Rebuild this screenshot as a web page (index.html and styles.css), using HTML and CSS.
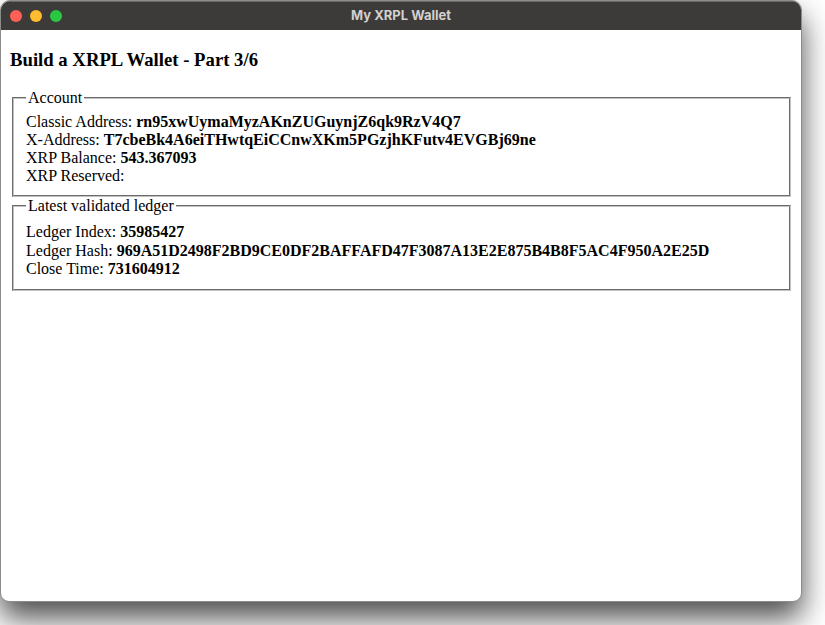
FILE: index.html
```html
<!DOCTYPE html>
<html>
<head>
<meta charset="utf-8">
<title>My XRPL Wallet</title>
<link rel="stylesheet" href="styles.css">
</head>
<body>
<div class="window">
  <div class="titlebar">
    <div class="lights">
      <span class="light red"></span>
      <span class="light yellow"></span>
      <span class="light green"></span>
    </div>
    <div class="title">My XRPL Wallet</div>
  </div>
  <div class="content">
    <h3 class="heading">Build a XRPL Wallet - Part 3/6</h3>
    <fieldset class="box">
      <legend>Account</legend>
      Classic Address: <strong>rn95xwUymaMyzAKnZUGuynjZ6qk9RzV4Q7</strong><br>
      X-Address: <strong>T7cbeBk4A6eiTHwtqEiCCnwXKm5PGzjhKFutv4EVGBj69ne</strong><br>
      XRP Balance: <strong>543.367093</strong><br>
      XRP Reserved: <strong></strong>
    </fieldset>
    <fieldset class="box ledger">
      <legend>Latest validated ledger</legend>
      Ledger Index: <strong>35985427</strong><br>
      Ledger Hash: <strong>969A51D2498F2BD9CE0DF2BAFFAFD47F3087A13E2E875B4B8F5AC4F950A2E25D</strong><br>
      Close Time: <strong>731604912</strong>
    </fieldset>
  </div>
</div>
</body>
</html>
```

FILE: styles.css
```css
html, body {
  margin: 0;
  padding: 0;
  background: #ffffff;
  width: 825px;
  height: 625px;
  overflow: hidden;
}

.window {
  box-sizing: border-box;
  width: 802px;
  height: 602px;
  border: 1px solid #8c8c8c;
  border-radius: 10px 10px 9px 9px;
  overflow: hidden;
  background: #ffffff;
  box-shadow: 0 16px 30px rgba(0, 0, 0, 0.7);
  display: flex;
  flex-direction: column;
}

.titlebar {
  position: relative;
  height: 28px;
  flex: none;
  background: #3d3b39;
  border-top: 1px solid #6a6866;
  display: flex;
  align-items: center;
  justify-content: center;
}

.lights {
  position: absolute;
  left: 9px;
  top: 8px;
  display: flex;
  gap: 8px;
}

.light {
  width: 12px;
  height: 12px;
  border-radius: 50%;
  display: block;
}

.red { background: #fe5f57; }
.yellow { background: #febc2e; }
.green { background: #28c840; }

.title {
  font-family: "Inter", "Open Sans", sans-serif;
  font-weight: 700;
  font-size: 13px;
  color: #d2d1d0;
  padding-bottom: 3px;
}

.content {
  flex: 1;
  padding: 0 8px 0 9px;
  font-family: "Liberation Serif", "Times New Roman", serif;
  font-size: 16px;
  color: #000;
}

.heading {
  font-size: 18.72px;
  font-weight: bold;
  margin: 18.72px 0;
}

.box {
  margin: 0 2px;
  padding: 0.35em 0.75em 0.625em;
  border: 2px groove #c0c0c0;
}

.ledger {
  line-height: 18.8px;
  padding-top: 7px;
}

.box legend {
  padding: 0 2px;
}
```
